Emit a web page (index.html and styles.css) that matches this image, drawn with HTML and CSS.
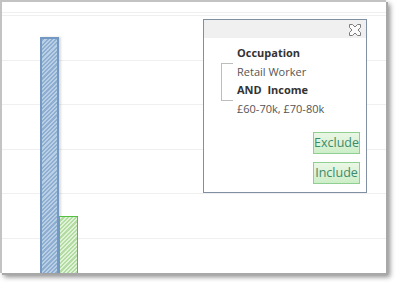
FILE: index.html
```html
<!DOCTYPE html>
<html>
<head>
<meta charset="utf-8">
<link rel="stylesheet" href="styles.css">
</head>
<body>
<div class="panel">
  <div class="plot">
    <div class="bar bar-blue"></div>
    <div class="bar bar-green"></div>
  </div>
  <div class="popup">
    <div class="popup-head">
      <svg class="close" width="14" height="12" viewBox="0 0 14 12">
        <path d="M1.5 0.5 H4.5 L7 3 L9.5 0.5 H12.5 V3.5 L10 6 L12.5 8.5 V11.5 H9.5 L7 9 L4.5 11.5 H1.5 V8.5 L4 6 L1.5 3.5 Z" fill="#fbfbfb" stroke="#7c7c7c" stroke-width="1"/>
      </svg>
    </div>
    <div class="popup-body">
      <div class="criteria">
        <div class="bracket"></div>
        <div class="lines">
          <div class="label">Occupation</div>
          <div class="value">Retail Worker</div>
          <div class="label">AND&nbsp;&nbsp;Income</div>
          <div class="value">£60-70k, £70-80k</div>
        </div>
      </div>
      <div class="actions">
        <button class="btn">Exclude</button>
        <button class="btn">Include</button>
      </div>
    </div>
  </div>
</div>
</body>
</html>
```

FILE: styles.css
```css
html, body {
  margin: 0;
  padding: 0;
  background: #ffffff;
  width: 397px;
  height: 285px;
  overflow: hidden;
  font-family: "Open Sans", "Noto Sans", sans-serif;
}

.panel {
  position: relative;
  width: 384px;
  height: 271px;
  border-top: 2px solid #c3c3c3;
  border-left: 2px solid #c3c3c3;
  background: #ffffff;
  box-shadow: 2px 2px 0 #a8a8a8, 4px 4px 5px rgba(0, 0, 0, 0.45);
}

.plot {
  height: 100%;
  display: flex;
  align-items: flex-end;
  padding-left: 38px;
  box-sizing: border-box;
  background-image: repeating-linear-gradient(to bottom, #efefef 0 1px, transparent 1px 44.6px);
  background-position: 0 13px;
}

.bar {
  width: 19px;
  box-sizing: border-box;
}

.bar-blue {
  height: 236px;
  border: 2px solid #7399c2;
  border-bottom: none;
  background: repeating-linear-gradient(-45deg, #8fafd2 0 1.5px, #b9cfe6 1.5px 3px);
  box-shadow: 2px 0 2px rgba(0, 0, 0, 0.14);
}

.bar-green {
  height: 57px;
  border: 1px solid #55bf44;
  border-left-width: 1px;
  border-bottom: none;
  background: repeating-linear-gradient(-45deg, #b3dca3 0 1.5px, #e0f2d8 1.5px 3px);
}

.popup {
  position: absolute;
  left: 201px;
  top: 17px;
  width: 164px;
  height: 174px;
  box-sizing: border-box;
  border: 1px solid #8090a2;
  background: #ffffff;
  display: flex;
  flex-direction: column;
}

.popup-head {
  height: 18px;
  background: #f0f0f0;
  display: flex;
  justify-content: flex-end;
  align-items: center;
  padding-right: 4px;
  padding-top: 2px;
  box-sizing: border-box;
}

.close {
  display: block;
}

.popup-body {
  flex: 1;
  display: flex;
  flex-direction: column;
  padding: 6px 6px 8px 17px;
}

.criteria {
  display: flex;
  align-items: center;
}

.bracket {
  width: 11px;
  height: 36px;
  border: 1px solid #bdbdbd;
  border-right: none;
  margin-right: 4px;
  margin-top: 1px;
}

.lines {
  display: flex;
  flex-direction: column;
}

.label {
  font-size: 11px;
  line-height: 18.5px;
  font-weight: 700;
  color: #333333;
}

.value {
  font-size: 11px;
  line-height: 18.5px;
  color: #555555;
}

.actions {
  margin-top: auto;
  display: flex;
  flex-direction: column;
  align-items: flex-end;
  gap: 8px;
}

.btn {
  margin: 0;
  width: 47px;
  height: 22px;
  padding: 0;
  border: 1px solid #8fcf8f;
  background: linear-gradient(to bottom, #eaf7e6, #cdeec8);
  color: #3d8a6b;
  font-family: "Open Sans", "Noto Sans", sans-serif;
  font-size: 12.5px;
  line-height: 20px;
  text-align: center;
}
```
